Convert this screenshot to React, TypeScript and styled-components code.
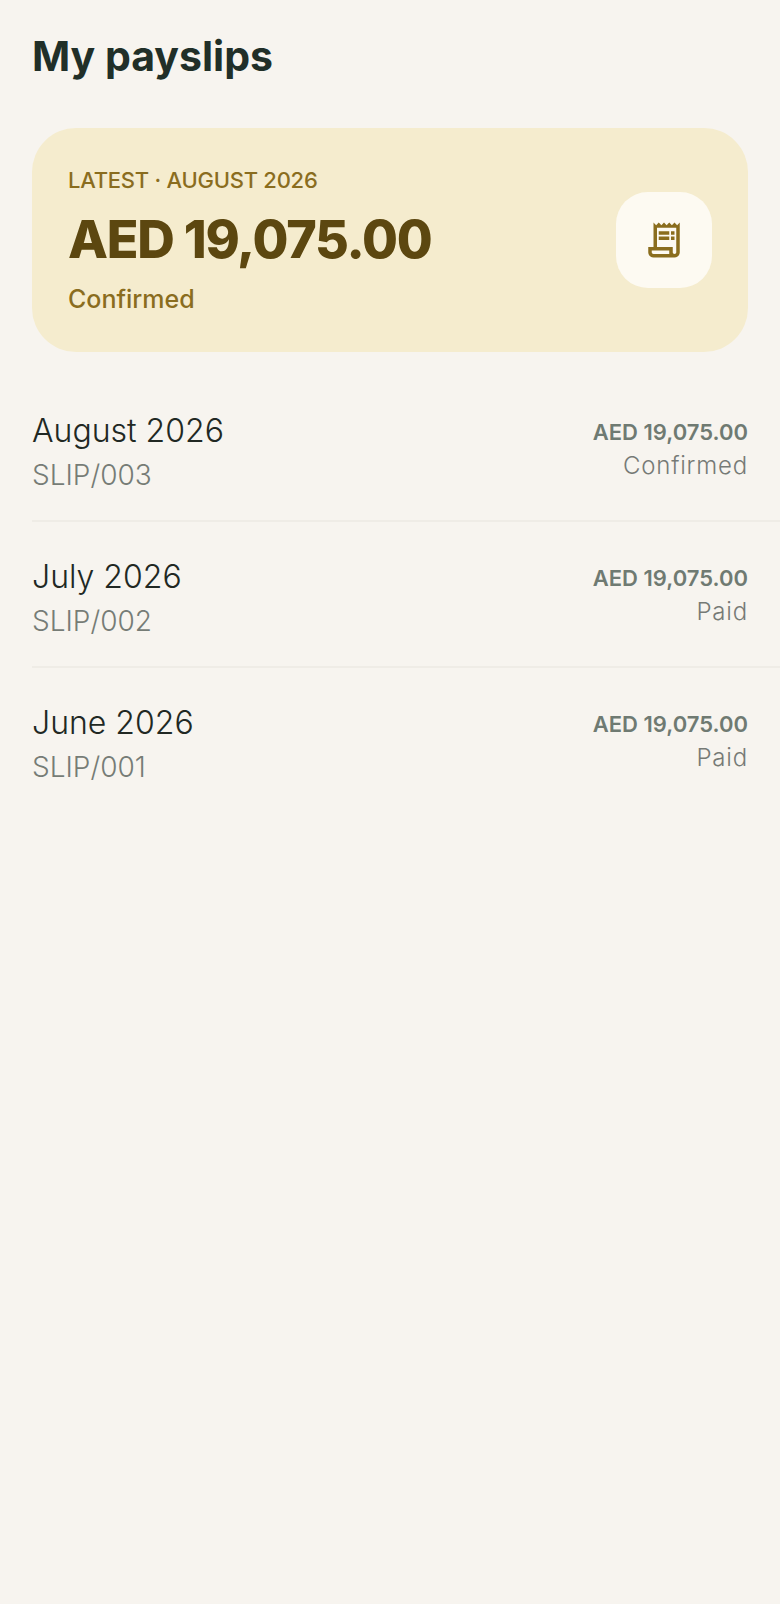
import styled, { createGlobalStyle } from 'styled-components';
import { MdOutlineReceiptLong } from 'react-icons/md';

type Slip = {
  month: string;
  code: string;
  amount: string;
  status: string;
};

const slips: Slip[] = [
  { month: 'August 2026', code: 'SLIP/003', amount: 'AED 19,075.00', status: 'Confirmed' },
  { month: 'July 2026', code: 'SLIP/002', amount: 'AED 19,075.00', status: 'Paid' },
  { month: 'June 2026', code: 'SLIP/001', amount: 'AED 19,075.00', status: 'Paid' },
];

const App = () => {
  return (
    <Page>
      <GlobalStyle />
      <Title>My payslips</Title>
      <LatestCard>
        <div>
          <LatestLabel>LATEST · AUGUST 2026</LatestLabel>
          <LatestAmount>AED 19,075.00</LatestAmount>
          <LatestStatus>Confirmed</LatestStatus>
        </div>
        <IconTile>
          <MdOutlineReceiptLong size={42} />
        </IconTile>
      </LatestCard>
      <SlipList>
        {slips.map((slip) => (
          <SlipRow key={slip.code}>
            <div>
              <Month>{slip.month}</Month>
              <Code>{slip.code}</Code>
            </div>
            <SlipRight>
              <Amount>{slip.amount}</Amount>
              <Status>{slip.status}</Status>
            </SlipRight>
          </SlipRow>
        ))}
      </SlipList>
    </Page>
  );
};

const GlobalStyle = createGlobalStyle`
  html, body {
    margin: 0;
    padding: 0;
    background: #f7f4ef;
  }
`;

const Page = styled.div`
  min-height: 1604px;
  background: #f7f4ef;
  font-family: Inter, 'Liberation Sans', sans-serif;
`;

const Title = styled.h1`
  margin: 0;
  padding: 31px 32px 0;
  height: 96px;
  box-sizing: border-box;
  font-size: 41px;
  line-height: 50px;
  font-weight: 700;
  color: #212f28;
`;

const LatestCard = styled.section`
  margin: 32px 32px 0;
  height: 224px;
  box-sizing: border-box;
  padding: 0 36px;
  border-radius: 44px;
  background: #f5ecce;
  display: flex;
  align-items: center;
  justify-content: space-between;
`;

const LatestLabel = styled.div`
  font-size: 22px;
  line-height: 28px;
  font-weight: 500;
  letter-spacing: -0.25px;
  color: #8a6d1e;
`;

const LatestAmount = styled.div`
  margin-top: 13px;
  font-size: 52px;
  line-height: 66px;
  font-weight: 800;
  letter-spacing: -1.25px;
  color: #5c4710;
`;

const LatestStatus = styled.div`
  margin-top: 10px;
  font-size: 25px;
  line-height: 32px;
  font-weight: 500;
  color: #8a6d1e;
`;

const IconTile = styled.div`
  width: 96px;
  height: 96px;
  border-radius: 32px;
  background: #fdfaf2;
  color: #8a6d1e;
  display: flex;
  align-items: center;
  justify-content: center;
`;

const SlipList = styled.div`
  margin-top: 24px;
  padding-left: 32px;
`;

const SlipRow = styled.div`
  height: 146px;
  box-sizing: border-box;
  padding: 34px 32px 0 0;
  display: flex;
  align-items: flex-start;
  justify-content: space-between;
  border-bottom: 2px solid #efece6;

  &:last-child {
    border-bottom: none;
  }
`;

const Month = styled.div`
  font-size: 32px;
  line-height: 42px;
  font-weight: 300;
  color: #212823;
`;

const Code = styled.div`
  margin-top: 5px;
  font-size: 28px;
  line-height: 36px;
  font-weight: 300;
  color: #767c76;
`;

const SlipRight = styled.div`
  padding-top: 6px;
  display: flex;
  flex-direction: column;
  align-items: flex-end;
`;

const Amount = styled.div`
  font-size: 22px;
  line-height: 33px;
  font-weight: 600;
  color: #6f7a72;
`;

const Status = styled.div`
  font-size: 24px;
  line-height: 34px;
  font-weight: 300;
  letter-spacing: 0.8px;
  color: #767a76;
`;

export default App;
